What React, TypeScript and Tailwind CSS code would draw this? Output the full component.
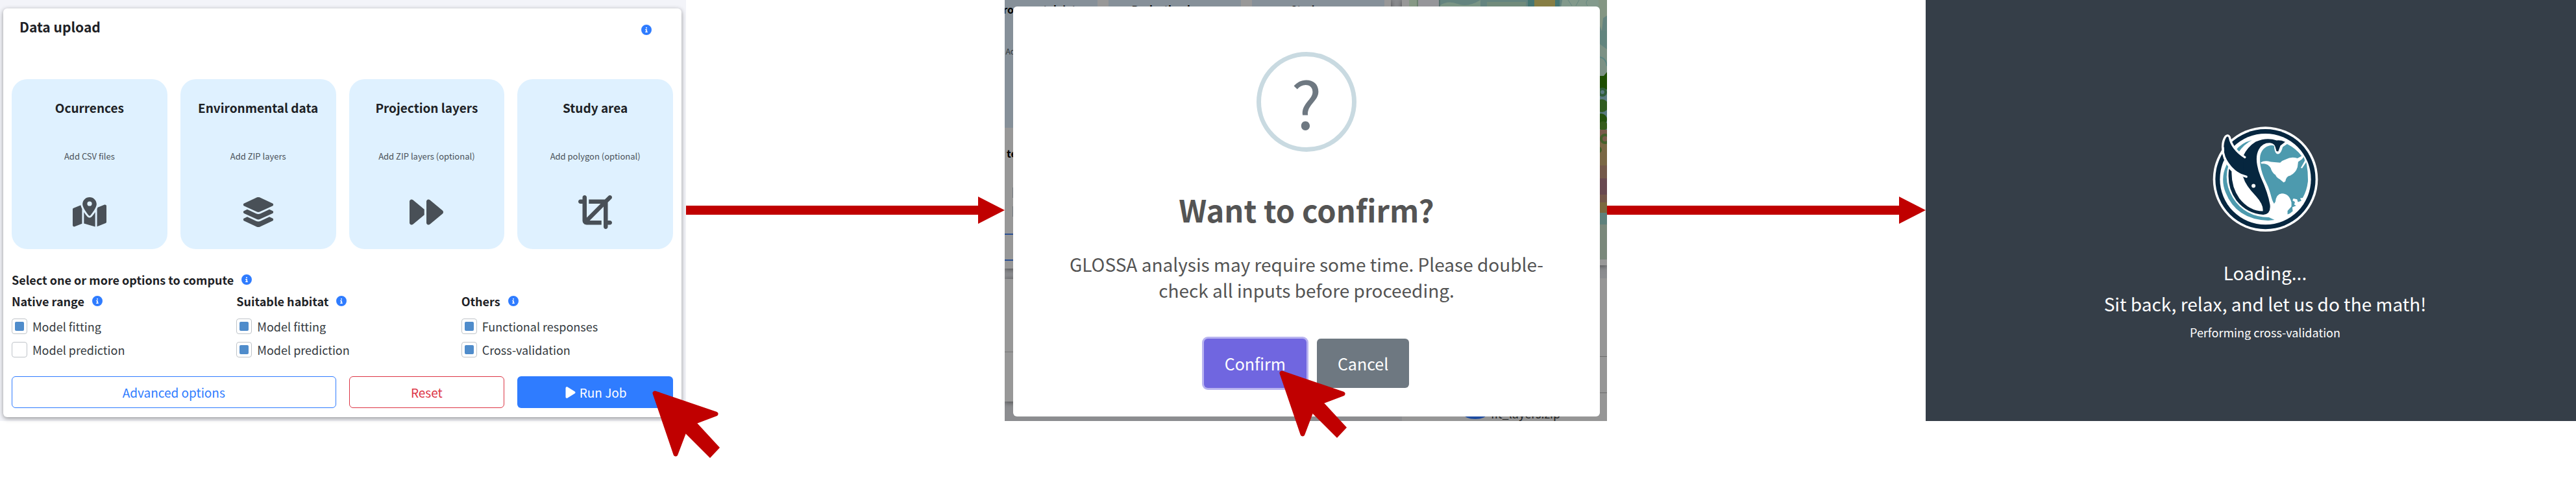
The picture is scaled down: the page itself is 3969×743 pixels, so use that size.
import { useState } from "react";
import {
  FaCircleInfo,
  FaCrop,
  FaForward,
  FaLayerGroup,
  FaMapLocationDot,
  FaPlay,
} from "react-icons/fa6";
import type { IconType } from "react-icons";

const uploads: { title: string; hint: string; Icon: IconType }[] = [
  { title: "Ocurrences", hint: "Add CSV files", Icon: FaMapLocationDot },
  { title: "Environmental data", hint: "Add ZIP layers", Icon: FaLayerGroup },
  { title: "Projection layers", hint: "Add ZIP layers (optional)", Icon: FaForward },
  { title: "Study area", hint: "Add polygon (optional)", Icon: FaCrop },
];

const optionGroups = [
  {
    title: "Native range",
    options: [
      { label: "Model fitting", checked: true },
      { label: "Model prediction", checked: false },
    ],
  },
  {
    title: "Suitable habitat",
    options: [
      { label: "Model fitting", checked: true },
      { label: "Model prediction", checked: true },
    ],
  },
  {
    title: "Others",
    options: [
      { label: "Functional responses", checked: true },
      { label: "Cross-validation", checked: true },
    ],
  },
];

function Info() {
  return (
    <button type="button" aria-label="More information" className="text-[#2f7cff]">
      <FaCircleInfo size={16} />
    </button>
  );
}

function Option({ label, checked }: { label: string; checked: boolean }) {
  const [on, setOn] = useState(checked);
  return (
    <label className="flex h-6 items-center gap-2 text-lg leading-6 text-[#343a40]">
      <input
        type="checkbox"
        checked={on}
        onChange={() => setOn(!on)}
        className="grid size-6 appearance-none place-items-center rounded border border-[#bfc4c9] bg-white before:size-[14px] before:rounded-xs checked:before:bg-[#4f8ccb]"
      />
      {label}
    </label>
  );
}

function Pointer({ className }: { className: string }) {
  return (
    <svg
      viewBox="0 0 104 104"
      className={`pointer-events-none absolute z-10 size-[104px] ${className}`}
      aria-hidden="true"
    >
      <path
        d="M4 4 L98 36 L68 49 L104 88 L89 104 L51 66 L36 98 Z"
        fill="#c00000"
      />
      <path
        d="M4 4 L98 36 L61 50 L50 61 L36 98 Z"
        fill="#c00000"
        stroke="#c00000"
        strokeWidth="7"
        strokeLinejoin="round"
      />
    </svg>
  );
}

function FlowArrow() {
  return (
    <div className="mt-[303px] flex h-[42px] items-center" aria-hidden="true">
      <div className="h-[14px] flex-1 bg-[#c00000]" />
      <svg viewBox="0 0 41 42" className="h-[42px] w-[41px]">
        <path d="M0 0 L41 21 L0 42 Z" fill="#c00000" />
      </svg>
    </div>
  );
}

function UploadPanel() {
  return (
    <section className="relative bg-[#f3f4f9] pt-[13px] pr-[7px] pb-[6px] pl-[5px]">
      <div className="rounded-md bg-white px-[13px] pt-[13px] pb-[14px] shadow-[0_2px_7px_rgba(0,0,0,0.4)]">
        <header className="flex items-center justify-between pr-[33px] pl-3">
          <h2 className="text-[21px] leading-[30px] font-bold">Data upload</h2>
          <div className="flex pt-[10px]">
            <Info />
          </div>
        </header>
        <div className="mt-[66px] grid grid-cols-4 gap-5">
          {uploads.map(({ title, hint, Icon }) => (
            <button
              key={title}
              type="button"
              className="flex flex-col items-center rounded-3xl bg-[#dff1ff] pt-[30px] pb-[31px]"
            >
              <span className="text-[19px] leading-7 font-bold">{title}</span>
              <span className="mt-[51px] text-[13px] leading-5 text-[#495057]">{hint}</span>
              <Icon size={52} className="mt-[50px] text-[#495057]" />
            </button>
          ))}
        </div>
        <div className="mt-[33px] flex items-center gap-3">
          <h3 className="text-lg leading-7 font-bold">Select one or more options to compute</h3>
          <Info />
        </div>
        <div className="mt-[5px] grid grid-cols-3 gap-5">
          {optionGroups.map((group) => (
            <fieldset key={group.title} className="flex flex-col gap-3">
              <legend className="mb-[13px] flex items-center gap-3 text-lg leading-7 font-bold">
                {group.title}
                <Info />
              </legend>
              {group.options.map((option) => (
                <Option key={option.label} {...option} />
              ))}
            </fieldset>
          ))}
        </div>
        <div className="mt-[29px] grid grid-cols-4 gap-5 text-[19px] leading-[27px]">
          <button
            type="button"
            className="col-span-2 rounded-md border border-[#2f7cff] py-[10px] text-[#2f7cff]"
          >
            Advanced options
          </button>
          <button
            type="button"
            className="rounded-md border border-[#dc3545] py-[10px] text-[#dc3545]"
          >
            Reset
          </button>
          <button
            type="button"
            className="flex items-center justify-center gap-1 rounded-md bg-[#2f7cff] py-[11px] text-white"
          >
            <FaPlay size={20} />
            Run Job
          </button>
        </div>
      </div>
      <Pointer className="-right-[52px] -bottom-[57px]" />
    </section>
  );
}

function DimmedMap() {
  return (
    <svg viewBox="0 0 305 400" className="h-[400px] w-[305px]" aria-hidden="true">
      <rect width="305" height="400" fill="#96969a" />
      <rect width="13" height="400" fill="#869885" />
      <rect x="12" width="2" height="400" fill="#6c8270" />
      <rect x="46" width="259" height="400" fill="#64847f" />
      <rect x="46" width="2" height="400" fill="#56716d" />
      <path d="M48 8 Q60 0 75 6 T110 0 V10 H48Z" fill="#7b9585" />
      <rect x="120" y="3" width="60" height="7" fill="#718b7b" />
      <rect x="183" width="10" height="12" fill="#457673" />
      <rect x="193" width="32" height="12" fill="#877e44" />
      <rect x="225" width="7" height="12" fill="#457673" />
      <path d="M236 0 H296 L300 12 H234Z" fill="#839a8c" />
      <path d="M245 0 l6 9 M262 0 l-5 9 M275 0 q-4 4 0 9" stroke="#668782" fill="none" />
      <path d="M292 0 H305 V24 L299 28 L297 48 L294 40Z" fill="#849683" />
      <path d="M294 48 H305 V70 H294Z" fill="#62847e" />
      <path d="M294 68 L305 76 V118 H294Z" fill="#7c9184" />
      <path d="M294 88 q10 2 11 14" stroke="#5b8682" fill="none" strokeWidth="2" />
      <rect x="294" y="117" width="11" height="24" fill="#1d4d00" />
      <path d="M300 117 L305 111 V117Z" fill="#1d4d00" />
      <rect x="294" y="138" width="11" height="62" fill="#58797f" />
      <circle cx="298" cy="142" r="5" fill="none" stroke="#2e5c38" strokeWidth="4" />
      <circle cx="297" cy="163" r="10" fill="#305b20" />
      <circle cx="296" cy="184" r="9" fill="#23510d" />
      <circle cx="299" cy="194" r="7" fill="#355b1c" />
      <rect x="294" y="200" width="11" height="20" fill="#795b4b" />
      <rect x="294" y="220" width="11" height="35" fill="#7a6744" />
      <rect x="294" y="255" width="11" height="20" fill="#74594a" />
      <rect x="294" y="275" width="11" height="25" fill="#694950" />
      <rect x="294" y="300" width="11" height="12" fill="#75574a" />
      <rect x="294" y="312" width="11" height="16" fill="#7b693f" />
      <circle cx="302" cy="214" r="6" fill="none" stroke="#44602a" strokeWidth="4" />
      <circle cx="292" cy="231" r="5" fill="#44602a" />
      <rect x="294" y="328" width="11" height="20" fill="#5e807b" />
      <rect x="294" y="346" width="11" height="54" fill="#7a887b" />
    </svg>
  );
}

function DimmedPage() {
  return (
    <div
      className="absolute inset-0 flex justify-between overflow-hidden bg-[#8c8d90]"
      aria-hidden="true"
    >
      <div className="flex w-[595px] flex-col">
        <div className="h-[414px] bg-[#989898] shadow-[0_1px_8px_rgba(0,0,0,0.5)]">
          <div className="-ml-[61px] flex h-[197px] gap-[17px]">
            {uploads.slice(1).map(({ title, hint }) => (
              <div
                key={title}
                className="flex w-[204px] flex-col items-center bg-[#869099] text-black"
              >
                <span className="mt-[2px] text-base leading-6 font-bold whitespace-nowrap">{title}</span>
                <span className="mt-[43px] text-xs leading-5 text-[#2b3034]">{hint}</span>
              </div>
            ))}
          </div>
          <div className="mt-[27px] ml-[3px] text-base leading-6 font-bold text-black">te</div>
          <div className="mt-[41px] ml-3 h-4 w-4 border border-[#70757a]" />
          <div className="mt-[13px] ml-3 h-4 w-4 border border-[#70757a]" />
          <div className="mt-[26px] h-[42px] w-[120px] border-y-2 border-[#2a4f93]" />
        </div>
        <div className="mt-4 h-[189px] divide-y divide-[#777] bg-[#989898] shadow-[0_1px_8px_rgba(0,0,0,0.5)]">
          <div className="h-[113px]" />
          <div className="h-9" />
        </div>
      </div>
      <div className="flex w-[316px] flex-col">
        <div className="flex h-[411px] items-start justify-end bg-[#989898] shadow-[0_1px_8px_rgba(0,0,0,0.5)]">
          <DimmedMap />
        </div>
        <div className="mt-5 flex-1 divide-y divide-[#6d6d6d] bg-[#969696]">
          <div className="h-[121px]" />
          <div className="h-14" />
          <div className="flex items-end pt-[19px] pl-24">
            <svg viewBox="0 0 35 24" className="h-6 w-[35px]">
              <ellipse cx="17" cy="13" rx="18" ry="8" fill="#1d4ba0" />
              <path d="M12 13 h12 l-6 4Z" fill="#8d97ab" />
            </svg>
            <span className="pl-[6px] text-lg leading-6 whitespace-nowrap text-[#222]">
              fit_layers.zip
            </span>
          </div>
        </div>
      </div>
    </div>
  );
}

function ConfirmPanel() {
  return (
    <section className="relative pt-[10px] pr-[11px] pb-[7px] pl-[13px]">
      <DimmedPage />
      <div
        role="dialog"
        aria-labelledby="confirm-title"
        className="relative flex flex-col items-center rounded-md bg-white px-16 pt-[70px] pb-11 text-center text-[#545454]"
      >
        <div className="flex size-[154px] items-center justify-center rounded-full border-[7px] border-[#c9dae1] text-[100px] leading-[140px] text-[#6e7881]">
          ?
        </div>
        <h2 id="confirm-title" className="mt-[61px] text-[47px] leading-[56px] font-bold">
          Want to confirm?
        </h2>
        <p className="mt-9 text-[28px] leading-10">
          GLOSSA analysis may require some time. Please double-
          <br />
          check all inputs before proceeding.
        </p>
        <div className="mt-[55px] flex gap-4 text-[25px] leading-9 text-white">
          <button
            type="button"
            className="rounded-md bg-[#7066e0] px-8 py-5 shadow-[0_0_0_3px_#b8b3f0]"
          >
            Confirm
          </button>
          <button type="button" className="rounded-md bg-[#6e7881] px-8 py-5">
            Cancel
          </button>
        </div>
      </div>
      <Pointer className="right-[401px] -bottom-[26px]" />
    </section>
  );
}

function Logo() {
  return (
    <svg viewBox="110 65 500 500" className="size-[167px]" role="img" aria-label="GLOSSA">
      <circle cx="360" cy="314" r="242" fill="#fff" />
      <circle cx="360" cy="314" r="231" fill="#06263f" />
      <circle cx="360" cy="314" r="210" fill="#fff" />
      <path d="M298 134 Q250 146 222 182 L236 190 Q262 152 298 134Z" fill="#4d9aae" />
      <path
        d="M182 245 Q150 310 176 375 Q225 500 372 505 L402 502 L376 490 Q265 488 210 400 Q165 325 190 250Z"
        fill="#4d9aae"
      />
      <path
        d="M400 427 C385 405 386 375 366 335 C340 285 331 240 336 205 C345 165 382 153 400 160 C401 185 408 198 418 198 C433 195 436 176 440 165 L460 152 Q500 172 527 207 L508 218 Q480 208 455 222 Q440 226 428 238 L385 234 Q355 226 338 237 L342 243 Q370 240 384 262 Q390 285 406 294 Q412 308 426 314 L444 329 L452 324 Q456 300 474 298 Q500 285 508 258 L511 234 L528 222 L537 212 L542 228 L523 262 L529 264 L548 236 Q557 275 556 325 Q551 368 532 400 L520 402 L526 414 L510 420 L506 407 L489 403 L485 412 L496 419 L493 432 L502 436 L484 444 L486 462 Q474 474 462 477 V460 L480 440 V422 Q470 380 436 380 Q410 382 406 418 Z"
        fill="#4d9aae"
      />
      <path
        d="M451 142 Q432 133 412 135 Q365 119 315 141 Q276 165 257 208 L240 220 L225 262 L258 306 Q268 342 316 392 Q352 432 348 462 Q285 460 240 403 Q202 350 204 278 L192 266 Q180 350 226 412 Q275 473 350 478 Q386 475 381 432 Q372 378 338 304 Q305 220 330 176 Q348 144 385 147 Q401 150 405 164 L411 185 L419 186 L429 159 Z"
        fill="#06263f"
      />
      <path
        d="M185 115 C164 145 165 195 182 225 C205 265 236 288 272 303 C254 285 255 250 264 214 C225 190 202 165 189 118Z"
        fill="#06263f"
      />
      <path
        d="M272 303 C225 291 190 262 172 218 C158 178 160 140 176 117 Q188 106 195 121 C203 162 230 190 265 213"
        fill="none"
        stroke="#fff"
        strokeWidth="10"
        strokeLinecap="round"
        strokeLinejoin="round"
      />
      <circle cx="305" cy="345" r="9" fill="#fff" />
    </svg>
  );
}

function LoadingPanel() {
  return (
    <section className="flex flex-col items-center bg-[#353e48] pt-[193px] pb-[123px] pl-11 text-center text-[28px] leading-10 text-white">
      <Logo />
      <p className="mt-10">Loading...</p>
      <p className="mt-2">Sit back, relax, and let us do the math!</p>
      <p className="mt-[10px] text-lg leading-7">Performing cross-validation</p>
    </section>
  );
}

export default function App() {
  return (
    <main className="grid min-h-screen grid-cols-[1057fr_491fr_928fr_491fr_1002fr] items-start overflow-hidden bg-white font-['Noto_Sans_CJK_SC',sans-serif] text-[#1d2125]">
      <UploadPanel />
      <FlowArrow />
      <ConfirmPanel />
      <FlowArrow />
      <LoadingPanel />
    </main>
  );
}
